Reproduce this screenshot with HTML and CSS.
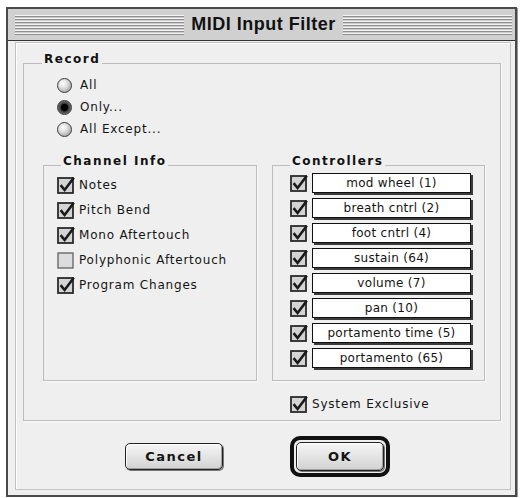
FILE: index.html
```html
<!DOCTYPE html>
<html lang="en">
<head>
    <meta charset="UTF-8">
    <meta name="viewport" content="width=device-width, initial-scale=1.0">
    <title>MIDI Input Filter</title>
    <link rel="stylesheet" href="styles.css">
</head>
<body>
    <svg class="defs" width="0" height="0" aria-hidden="true">
        <symbol id="box-off" viewBox="0 0 18 18">
            <rect x="1" y="2" width="15" height="15" fill="#dcdcdc" stroke="#6a6a6a" stroke-width="1.4"/>
        </symbol>
        <symbol id="box-on" viewBox="0 0 18 18">
            <rect x="1" y="2" width="15" height="15" fill="#d4d4d4" stroke="#2a2a2a" stroke-width="1.8"/>
            <path d="M3.6 9.2 L7.6 14 L16.8 1.8" fill="none" stroke="#1a1a1a" stroke-width="2.6"/>
        </symbol>
    </svg>

    <div class="window">
        <div class="titlebar">
            <div class="stripes"></div>
            <h1 class="title">MIDI Input Filter</h1>
            <div class="stripes"></div>
        </div>

        <div class="content">
            <div class="panel">
                <fieldset class="group record">
                    <legend>Record</legend>
                    <div class="radios">
                        <div class="radio-row"><span class="radio"></span>All</div>
                        <div class="radio-row"><span class="radio on"></span>Only...</div>
                        <div class="radio-row"><span class="radio"></span>All Except...</div>
                    </div>

                    <div class="columns">
                        <fieldset class="group channel">
                            <legend>Channel Info</legend>
                            <div class="list">
                                <div class="check-row"><svg class="cb"><use href="#box-on"/></svg>Notes</div>
                                <div class="check-row"><svg class="cb"><use href="#box-on"/></svg>Pitch Bend</div>
                                <div class="check-row"><svg class="cb"><use href="#box-on"/></svg>Mono Aftertouch</div>
                                <div class="check-row"><svg class="cb"><use href="#box-off"/></svg>Polyphonic Aftertouch</div>
                                <div class="check-row"><svg class="cb"><use href="#box-on"/></svg>Program Changes</div>
                            </div>
                        </fieldset>

                        <fieldset class="group controllers">
                            <legend>Controllers</legend>
                            <div class="list">
                                <div class="ctrl-row"><svg class="cb"><use href="#box-on"/></svg><span class="field">mod wheel (1)</span></div>
                                <div class="ctrl-row"><svg class="cb"><use href="#box-on"/></svg><span class="field">breath cntrl (2)</span></div>
                                <div class="ctrl-row"><svg class="cb"><use href="#box-on"/></svg><span class="field">foot cntrl (4)</span></div>
                                <div class="ctrl-row"><svg class="cb"><use href="#box-on"/></svg><span class="field">sustain (64)</span></div>
                                <div class="ctrl-row"><svg class="cb"><use href="#box-on"/></svg><span class="field">volume (7)</span></div>
                                <div class="ctrl-row"><svg class="cb"><use href="#box-on"/></svg><span class="field">pan (10)</span></div>
                                <div class="ctrl-row"><svg class="cb"><use href="#box-on"/></svg><span class="field">portamento time (5)</span></div>
                                <div class="ctrl-row"><svg class="cb"><use href="#box-on"/></svg><span class="field">portamento (65)</span></div>
                            </div>
                        </fieldset>

                        <div class="check-row sysex"><svg class="cb"><use href="#box-on"/></svg>System Exclusive</div>
                    </div>
                </fieldset>

                <div class="button-row">
                    <button class="btn" type="button">Cancel</button>
                    <div class="default-ring">
                        <button class="btn" type="button">OK</button>
                    </div>
                </div>
            </div>
        </div>
    </div>
</body>
</html>
```

FILE: styles.css
```css
body {
    margin: 0;
    background: #fff;
    font-family: "DejaVu Sans", Verdana, sans-serif;
    font-size: 12px;
    color: #141414;
}
.defs { position: absolute; }

.window {
    box-sizing: border-box;
    width: 511px;
    height: 490px;
    margin: 7px 0 0 6px;
    border: 2px solid #4a4a4a;
    background: #efefef;
    display: flex;
    flex-direction: column;
    box-shadow: 1px 1px 0 #9a9a9a;
}

.titlebar {
    height: 31px;
    border-bottom: 1px solid #333;
    background: #d0d0d0;
    display: flex;
    align-items: center;
    padding: 0 3px 0 7px;
}
.stripes {
    flex: 1;
    height: 20px;
    background: repeating-linear-gradient(to bottom, #f2f2f2 0 1px, #8e8e8e 1px 2px, #cdcdcd 2px 3px);
}
.title {
    margin: 0;
    padding: 0 7px;
    font: bold 18px "Liberation Sans", Arial, sans-serif;
    letter-spacing: 0.5px;
    color: #111;
}

.content {
    flex: 1;
    display: flex;
    padding: 1px 4px 5px 7px;
}
.panel {
    flex: 1;
    border: 1px solid #c2c2c2;
    box-shadow: inset 1px 1px 0 #fff;
    padding: 9px 9px 0 7px;
    display: flex;
    flex-direction: column;
}

.group {
    margin: 0;
    border: 1px solid #bcbcbc;
    box-shadow: 1px 1px 0 #fafafa;
    min-width: 0;
}
.group legend {
    padding: 0 2px 8px;
    line-height: 14px;
    font-weight: bold;
    letter-spacing: 1.5px;
    color: #111;
}
.record { padding: 0 15px 4px 19px; }
.record legend { margin-left: -1px; }

.radios { margin-left: 14px; }
.radio-row {
    height: 22px;
    display: flex;
    align-items: center;
    gap: 8px;
    letter-spacing: 0.8px;
}
.radio {
    box-sizing: border-box;
    width: 15px;
    height: 15px;
    border: 1px solid #3a3a3a;
    border-radius: 50%;
    background: radial-gradient(circle at 38% 35%, #fff 0, #dcdcdc 40%, #8a8a8a 100%);
}
.radio.on {
    background: radial-gradient(circle, #000 0 3.2px, #3c3c3c 4.2px, #6c6c6c 6.5px);
}

.columns {
    margin-top: 14px;
    display: grid;
    grid-template-columns: 214px 213px;
    column-gap: 15px;
}
.channel { padding: 0 0 0 13px; }
.channel legend { margin-left: 4px; }
.channel .list { margin-top: -4px; }
.controllers { padding: 0 0 10px 17px; }
.controllers legend { margin-left: 0; }
.controllers .list { margin-top: -6px; }

.cb { width: 18px; height: 18px; flex: none; }

.check-row {
    height: 25px;
    display: flex;
    align-items: center;
    gap: 4px;
    letter-spacing: 0.8px;
}
.ctrl-row {
    height: 25px;
    display: flex;
    align-items: center;
    gap: 4px;
}
.field {
    box-sizing: border-box;
    width: 159px;
    height: 20px;
    border: 1px solid #111;
    background: #fff;
    box-shadow: 2px 2px 0 #3a3a3a;
    text-align: center;
    line-height: 18px;
    letter-spacing: 0.3px;
}

.sysex {
    grid-column: 2;
    margin-top: 10px;
    padding-left: 18px;
}

.button-row {
    margin-top: 15px;
    display: flex;
    justify-content: center;
    align-items: center;
    gap: 67px;
    padding-right: 9px;
}
.btn {
    box-sizing: border-box;
    width: 98px;
    height: 27px;
    border: 1px solid #222;
    border-radius: 5px;
    background: linear-gradient(#f6f6f6, #d2d2d2);
    box-shadow: inset 1px 1px 0 #fff, inset -1px -1px 0 #a0a0a0, 1px 1px 0 #777;
    font: bold 13px "DejaVu Sans", Verdana, sans-serif;
    letter-spacing: 1.5px;
    color: #141414;
    padding: 0;
}
.default-ring {
    box-sizing: border-box;
    width: 100px;
    height: 41px;
    border: 4px solid #111;
    border-radius: 10px;
    padding: 2px;
    display: flex;
}
.default-ring .btn {
    width: 100%;
    height: 100%;
}
```
